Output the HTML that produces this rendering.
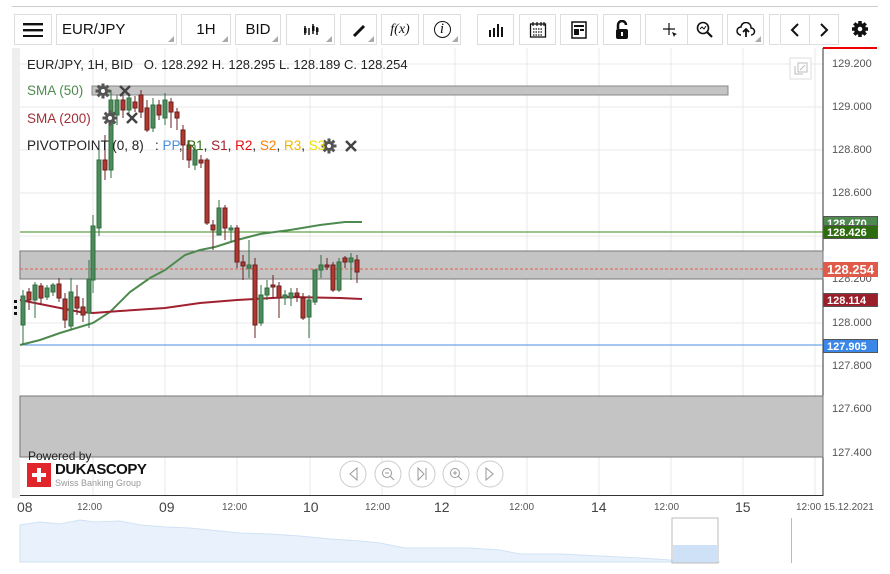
<!DOCTYPE html>
<html><head><meta charset="utf-8"><style>
*{margin:0;padding:0;box-sizing:border-box}
body{width:890px;height:574px;background:#fff;font-family:"Liberation Sans",sans-serif;position:relative;overflow:hidden}
.b{position:absolute;top:14px;height:31px;border:1px solid #ddd;background:#fff;font-size:15px;color:#111;display:flex;align-items:center;justify-content:center}
.b .c{position:absolute;right:2px;bottom:2px;width:0;height:0;border-left:6px solid transparent;border-bottom:6px solid #aaa}
.t{position:absolute;font-size:11px;color:#555}
.tag{position:absolute;left:823px;width:55px;height:14px;color:#fff;font-size:13px;font-weight:bold;padding-left:3px;line-height:14px;border:1px solid #555}
.x{position:absolute;font-size:10px;color:#555;top:502px}
.X{position:absolute;font-size:14px;color:#444;top:499px}
.ic{position:absolute}
</style></head><body>
<div style="position:absolute;left:12px;top:6px;width:866px;height:1px;background:#ccc"></div>
<div class="b" style="left:14px;width:38px"><svg width="20" height="14"><rect y="0" width="20" height="2.4" fill="#111"/><rect y="6" width="20" height="2.4" fill="#111"/><rect y="12" width="20" height="2.4" fill="#111"/></svg></div>
<div class="b" style="left:56px;width:121px;justify-content:flex-start;padding-left:5px">EUR/JPY<span class="c"></span></div>
<div class="b" style="left:181px;width:50px">1H<span class="c"></span></div>
<div class="b" style="left:235px;width:46px">BID<span class="c"></span></div>
<div class="b" style="left:286px;width:49px"><svg width="16" height="14"><path d="M2 3v9M6 5v7M10 1v10M14 4v8" stroke="#111" stroke-width="1.5"/><rect x="1" y="5" width="2.5" height="5" fill="#111"/><rect x="9" y="3" width="2.5" height="5" fill="#111"/><rect x="13" y="5" width="2.5" height="4" fill="#111"/></svg><span class="c"></span></div>
<div class="b" style="left:340px;width:37px"><svg width="14" height="14"><path d="M2 13L12 3" stroke="#111" stroke-width="3"/></svg><span class="c"></span></div>
<div class="b" style="left:381px;width:38px;font-family:'Liberation Serif',serif;font-style:italic;font-size:14px">f(x)</div>
<div class="b" style="left:423px;width:38px;font-family:'Liberation Serif',serif;font-style:italic;font-size:15px"><span style="border:1.5px solid #111;border-radius:50%;width:17px;height:17px;display:flex;align-items:center;justify-content:center">i</span><span class="c"></span></div>
<div class="b" style="left:477px;width:37px"><svg width="16" height="14"><path d="M2 14V7M6 14V5M10 14V1M14 14V4" stroke="#111" stroke-width="2"/></svg></div>
<div class="b" style="left:519px;width:37px"><svg width="18" height="18"><rect x="1.5" y="3" width="15" height="13" fill="none" stroke="#111" stroke-width="1.3"/><path d="M4 1v4M8 1v4M12 1v4M15 1v4M4 8h10M4 11h10M4 14h10" stroke="#111" stroke-width="1.2" stroke-dasharray="1.5 1"/></svg></div>
<div class="b" style="left:560px;width:38px"><svg width="16" height="18"><rect x="1" y="1" width="14" height="16" fill="none" stroke="#111" stroke-width="1.5"/><rect x="3" y="4" width="10" height="2" fill="#111"/><rect x="3" y="8" width="5" height="6" fill="#111"/><rect x="9" y="8" width="4" height="2" fill="#111"/></svg></div>
<div class="b" style="left:603px;width:38px"><svg width="16" height="20"><path d="M4 9V5a4 4 0 0 1 8 0" fill="none" stroke="#111" stroke-width="2.5"/><rect x="2" y="9" width="12" height="10" rx="2" fill="#111"/><path d="M8 12v4" stroke="#fff" stroke-width="2"/></svg></div>
<div class="b" style="left:645px;width:49px"><svg width="18" height="18"><path d="M8 2v12M2 8h12" stroke="#111" stroke-width="1.2"/><path d="M11 11l5 2-2 1-1 2z" fill="#111"/></svg></div>
<div class="b" style="left:687px;width:36px"><svg width="18" height="18"><circle cx="7" cy="7" r="5.5" fill="none" stroke="#111" stroke-width="1.6"/><path d="M11 11l5 5" stroke="#111" stroke-width="2.2"/><path d="M4 8l2-2 2 2 2-3" fill="none" stroke="#111"/></svg></div>
<div class="b" style="left:727px;width:37px"><svg width="20" height="16"><path d="M5 13a4 4 0 0 1 0-8a5 5 0 0 1 10 1a3.5 3.5 0 0 1 0 7" fill="none" stroke="#111" stroke-width="1.5"/><path d="M10 15V8M7 10l3-3 3 3" fill="none" stroke="#111" stroke-width="1.8"/></svg><span class="c"></span></div>
<div class="b" style="left:769px;width:10px;border-right:none"></div>
<div class="b" style="left:780px;width:30px;font-size:20px"><svg width="12" height="16"><path d="M9 2L3 8l6 6" fill="none" stroke="#111" stroke-width="2"/></svg></div>
<div class="b" style="left:809px;width:30px"><svg width="12" height="16"><path d="M3 2l6 6-6 6" fill="none" stroke="#111" stroke-width="2"/></svg></div>
<div style="position:absolute;left:851px;top:20px"><svg width="18" height="18" viewBox="0 0 18 18"><g fill="#111"><circle cx="9" cy="9" r="6"/><g stroke="#111" stroke-width="3.5"><path d="M9 1v16M1 9h16M3.3 3.3l11.4 11.4M14.7 3.3L3.3 14.7"/></g></g><circle cx="9" cy="9" r="2.3" fill="#fff"/></svg></div>

<svg style="position:absolute;left:0;top:0" width="890" height="574">
<defs>
<g id="gear"><circle cx="0" cy="0" r="5" fill="#555"/><path d="M0 -7.5v15M-7.5 0h15M-5.3 -5.3l10.6 10.6M5.3 -5.3l-10.6 10.6" stroke="#555" stroke-width="3"/><circle r="2" fill="#fff"/></g>
<path id="xx" d="M-5 -5L5 5M5 -5L-5 5" stroke="#444" stroke-width="2.5"/>
</defs>
<rect x="12" y="48" width="8" height="450" fill="#eee"/>
<line x1="823" y1="48" x2="877" y2="48" stroke="#e00" stroke-width="2"/>
<g stroke="#e8e8e8" stroke-width="1">
<path d="M20 64H823M20 107H823M20 150H823M20 193H823M20 236H823M20 279H823M20 323H823M20 366H823M20 409H823M20 453H823"/>
<path d="M93 48V495M165 48V495M237 48V495M310 48V495M382 48V495M455 48V495M527 48V495M599 48V495M671 48V495M743 48V495M815 48V495"/>
</g>
<line x1="823" y1="48" x2="823" y2="496" stroke="#333"/>
<line x1="20" y1="495.5" x2="823" y2="495.5" stroke="#333"/>
<rect x="92" y="86" width="636" height="9" fill="#c4c4c4" stroke="#888"/>
<rect x="20" y="251" width="803" height="28" fill="#c4c4c4" stroke="#777"/>
<rect x="20" y="396" width="803" height="61" fill="#c4c4c4" stroke="#777"/>
<line x1="20" y1="232" x2="878" y2="232" stroke="#3a8a1a"/>
<line x1="20" y1="345" x2="878" y2="345" stroke="#4a8de0"/>
<line x1="20" y1="269" x2="823" y2="269" stroke="#e06050" stroke-dasharray="3 2"/>
<polyline fill="none" stroke="#4e8a50" stroke-width="2" points="20,345 40,340 60,333 93,323 110,312 130,292 150,278 165,270 185,255 200,250 215,247 237,240 260,234 290,230 320,225 345,222 362,222"/>
<polyline fill="none" stroke="#a02030" stroke-width="2" points="20,300 50,306 80,312 93,313 120,311 165,308 200,303 237,300 290,297 340,298 362,299"/>
<g stroke-width="1">
<g stroke="#2f6f3f"><line x1="23" y1="290" x2="23" y2="345"/><line x1="35" y1="282" x2="35" y2="318"/><line x1="47" y1="285" x2="47" y2="300"/><line x1="53" y1="283" x2="53" y2="296"/><line x1="71" y1="278" x2="71" y2="330"/><line x1="89" y1="260" x2="89" y2="328"/><line x1="93" y1="215" x2="93" y2="293"/><line x1="99" y1="150" x2="99" y2="236"/><line x1="111" y1="90" x2="111" y2="178"/><line x1="117" y1="95" x2="117" y2="125"/><line x1="129" y1="93" x2="129" y2="115"/><line x1="153" y1="98" x2="153" y2="132"/><line x1="165" y1="93" x2="165" y2="125"/><line x1="195" y1="145" x2="195" y2="170"/><line x1="219" y1="200" x2="219" y2="232"/><line x1="231" y1="225" x2="231" y2="242"/><line x1="249" y1="240" x2="249" y2="278"/><line x1="261" y1="285" x2="261" y2="326"/><line x1="267" y1="280" x2="267" y2="300"/><line x1="285" y1="290" x2="285" y2="305"/><line x1="291" y1="288" x2="291" y2="306"/><line x1="309" y1="295" x2="309" y2="338"/><line x1="315" y1="270" x2="315" y2="305"/><line x1="321" y1="255" x2="321" y2="278"/><line x1="339" y1="258" x2="339" y2="292"/><line x1="351" y1="253" x2="351" y2="280"/></g>
<g fill="#4e8a5e" stroke="#2f6f3f"><rect x="21" y="296" width="4" height="29"/><rect x="33" y="285" width="4" height="15"/><rect x="45" y="288" width="4" height="9"/><rect x="51" y="285" width="4" height="7"/><rect x="69" y="292" width="4" height="34"/><rect x="87" y="279" width="4" height="34"/><rect x="91" y="226" width="4" height="54"/><rect x="97" y="160" width="4" height="68"/><rect x="109" y="100" width="4" height="70"/><rect x="115" y="100" width="4" height="15"/><rect x="127" y="98" width="4" height="12"/><rect x="151" y="105" width="4" height="23"/><rect x="163" y="100" width="4" height="18"/><rect x="193" y="150" width="4" height="15"/><rect x="217" y="208" width="4" height="27"/><rect x="229" y="228" width="4" height="2"/><rect x="247" y="265" width="4" height="3"/><rect x="259" y="295" width="4" height="28"/><rect x="265" y="288" width="4" height="7"/><rect x="283" y="295" width="4" height="3"/><rect x="289" y="293" width="4" height="5"/><rect x="307" y="300" width="4" height="17"/><rect x="313" y="270" width="4" height="32"/><rect x="319" y="265" width="4" height="5"/><rect x="337" y="262" width="4" height="28"/><rect x="349" y="258" width="4" height="4"/></g>
<g stroke="#6a2020"><line x1="29" y1="288" x2="29" y2="310"/><line x1="41" y1="283" x2="41" y2="305"/><line x1="59" y1="278" x2="59" y2="302"/><line x1="65" y1="293" x2="65" y2="328"/><line x1="77" y1="285" x2="77" y2="315"/><line x1="83" y1="298" x2="83" y2="322"/><line x1="105" y1="135" x2="105" y2="180"/><line x1="123" y1="95" x2="123" y2="118"/><line x1="135" y1="96" x2="135" y2="112"/><line x1="141" y1="90" x2="141" y2="118"/><line x1="147" y1="100" x2="147" y2="132"/><line x1="159" y1="100" x2="159" y2="120"/><line x1="171" y1="98" x2="171" y2="128"/><line x1="177" y1="108" x2="177" y2="130"/><line x1="183" y1="125" x2="183" y2="160"/><line x1="189" y1="140" x2="189" y2="168"/><line x1="201" y1="155" x2="201" y2="168"/><line x1="207" y1="158" x2="207" y2="225"/><line x1="213" y1="220" x2="213" y2="250"/><line x1="225" y1="205" x2="225" y2="240"/><line x1="237" y1="225" x2="237" y2="268"/><line x1="243" y1="255" x2="243" y2="280"/><line x1="255" y1="258" x2="255" y2="338"/><line x1="273" y1="275" x2="273" y2="298"/><line x1="279" y1="282" x2="279" y2="318"/><line x1="297" y1="288" x2="297" y2="302"/><line x1="303" y1="293" x2="303" y2="320"/><line x1="327" y1="258" x2="327" y2="270"/><line x1="333" y1="262" x2="333" y2="292"/><line x1="345" y1="256" x2="345" y2="268"/><line x1="357" y1="255" x2="357" y2="283"/></g>
<g fill="#b0382e" stroke="#6a2020"><rect x="27" y="292" width="4" height="8"/><rect x="39" y="286" width="4" height="12"/><rect x="57" y="284" width="4" height="14"/><rect x="63" y="299" width="4" height="21"/><rect x="75" y="297" width="4" height="11"/><rect x="81" y="307" width="4" height="8"/><rect x="103" y="160" width="4" height="10"/><rect x="121" y="100" width="4" height="10"/><rect x="133" y="102" width="4" height="6"/><rect x="139" y="95" width="4" height="17"/><rect x="145" y="108" width="4" height="22"/><rect x="157" y="105" width="4" height="10"/><rect x="169" y="102" width="4" height="10"/><rect x="175" y="112" width="4" height="6"/><rect x="181" y="130" width="4" height="15"/><rect x="187" y="145" width="4" height="15"/><rect x="199" y="160" width="4" height="3"/><rect x="205" y="160" width="4" height="63"/><rect x="211" y="225" width="4" height="5"/><rect x="223" y="208" width="4" height="20"/><rect x="235" y="228" width="4" height="34"/><rect x="241" y="262" width="4" height="4"/><rect x="253" y="265" width="4" height="60"/><rect x="271" y="285" width="4" height="2"/><rect x="277" y="286" width="4" height="12"/><rect x="295" y="293" width="4" height="3"/><rect x="301" y="298" width="4" height="20"/><rect x="325" y="265" width="4" height="2"/><rect x="331" y="265" width="4" height="25"/><rect x="343" y="258" width="4" height="4"/><rect x="355" y="260" width="4" height="12"/></g>
</g>
<use href="#gear" x="103" y="91"/><use href="#xx" x="125" y="91"/>
<use href="#gear" x="110" y="118"/><use href="#xx" x="132" y="118"/>
<use href="#gear" x="329" y="146"/><use href="#xx" x="351" y="146"/>
<rect x="14" y="300" width="3" height="3" fill="#111"/><rect x="14" y="306" width="3" height="3" fill="#111"/><rect x="14" y="312" width="3" height="3" fill="#111"/>
<rect x="790" y="58" width="21" height="21" fill="#fff" stroke="#ddd"/>
<path d="M795 66v8h8M798 63h9v9h-9z M800 70l5-5" fill="none" stroke="#bbb"/>
<g fill="#fff" stroke="#ccc"><circle cx="353" cy="474" r="13"/><circle cx="388" cy="474" r="13"/><circle cx="422" cy="474" r="13"/><circle cx="456" cy="474" r="13"/><circle cx="490" cy="474" r="13"/></g>
<g fill="none" stroke="#999"><path d="M357 468l-7 6 7 6z"/><path d="M486 468l7 6-7 6z"/><circle cx="387" cy="473" r="4.5"/><path d="M390 476l4 4M385 473h4"/><circle cx="455" cy="473" r="4.5"/><path d="M458 476l4 4M453 473h4M455 471v4"/><path d="M418 468l6 6-6 6zM426 468v12"/></g>
<rect x="20" y="518" width="860" height="45" fill="#fff"/>
<path d="M20 525 L40 522 60 524 80 520 95 522 120 521 140 525 165 527 190 528 210 530 240 533 270 534 300 536 330 539 360 541 380 543 405 548 430 548 470 548 500 550 520 554 560 554 600 556 640 558 670 560 700 562 720 562 20 562Z" fill="#e9f2fc" stroke="#d0e2f4"/>
<rect x="672" y="518" width="46" height="45" fill="none" stroke="#bbb"/>
<rect x="673" y="545" width="45" height="17" fill="#cfe1f6"/>
<rect x="791" y="518" width="1" height="45" fill="#bbb"/>
</svg>

<div style="position:absolute;left:27px;top:57px;font-size:13px;color:#222">EUR/JPY, 1H, BID &nbsp;&nbsp;O. 128.292 H. 128.295 L. 128.189 C. 128.254</div>
<div style="position:absolute;left:27px;top:83px;font-size:13.5px;color:#4e8a50">SMA (50)</div>
<div style="position:absolute;left:27px;top:111px;font-size:13.5px;color:#a03038">SMA (200)</div>
<div style="position:absolute;left:27px;top:138px;font-size:13.5px;color:#222">PIVOTPOINT (0, 8) &nbsp;&nbsp;: <span style="color:#4a8de0">PP</span>, <span style="color:#2e6b0e">R1</span>, <span style="color:#a02030">S1</span>, <span style="color:#e01010">R2</span>, <span style="color:#ff8000">S2</span>, <span style="color:#f0b800">R3</span>, <span style="color:#f0e000">S3</span></div>

<div class="t" style="left:832px;top:58px">129.200</div>
<div class="t" style="left:832px;top:101px">129.000</div>
<div class="t" style="left:832px;top:144px">128.800</div>
<div class="t" style="left:832px;top:187px">128.600</div>
<div class="t" style="left:832px;top:273px">128.200</div>
<div class="t" style="left:832px;top:317px">128.000</div>
<div class="t" style="left:832px;top:360px">127.800</div>
<div class="t" style="left:832px;top:403px">127.600</div>
<div class="t" style="left:832px;top:447px">127.400</div>
<div class="tag" style="top:216px;background:#4e8a50;font-size:11px">128.470</div>
<div class="tag" style="top:225px;background:#2e6b0e;font-size:11px">128.426</div>
<div class="tag" style="top:262px;background:#e05a4a;border-color:#e05a4a;height:15px">128.254</div>
<div class="tag" style="top:293px;background:#9b1f2a;font-size:11px">128.114</div>
<div class="tag" style="top:339px;background:#3a87e8;font-size:11px">127.905</div>

<div style="position:absolute;left:28px;top:449px;font-size:12px;color:#222">Powered by</div>
<div style="position:absolute;left:27px;top:463px;width:24px;height:24px;background:#e0252b"><div style="position:absolute;left:10px;top:5px;width:4px;height:14px;background:#fff"></div><div style="position:absolute;left:5px;top:10px;width:14px;height:4px;background:#fff"></div></div>
<div style="position:absolute;left:55px;top:461px;font-size:15px;font-weight:bold;color:#111;letter-spacing:-0.5px">DUKASCOPY</div>
<div style="position:absolute;left:55px;top:478px;font-size:9px;color:#999">Swiss Banking Group</div>

<div class="X" style="left:17px">08</div>
<div class="x" style="left:77px">12:00</div>
<div class="X" style="left:159px">09</div>
<div class="x" style="left:222px">12:00</div>
<div class="X" style="left:303px">10</div>
<div class="x" style="left:365px">12:00</div>
<div class="X" style="left:434px">12</div>
<div class="x" style="left:509px">12:00</div>
<div class="X" style="left:591px">14</div>
<div class="x" style="left:654px">12:00</div>
<div class="X" style="left:735px">15</div>
<div class="x" style="left:796px">12:00 15.12.2021</div>
</body></html>
